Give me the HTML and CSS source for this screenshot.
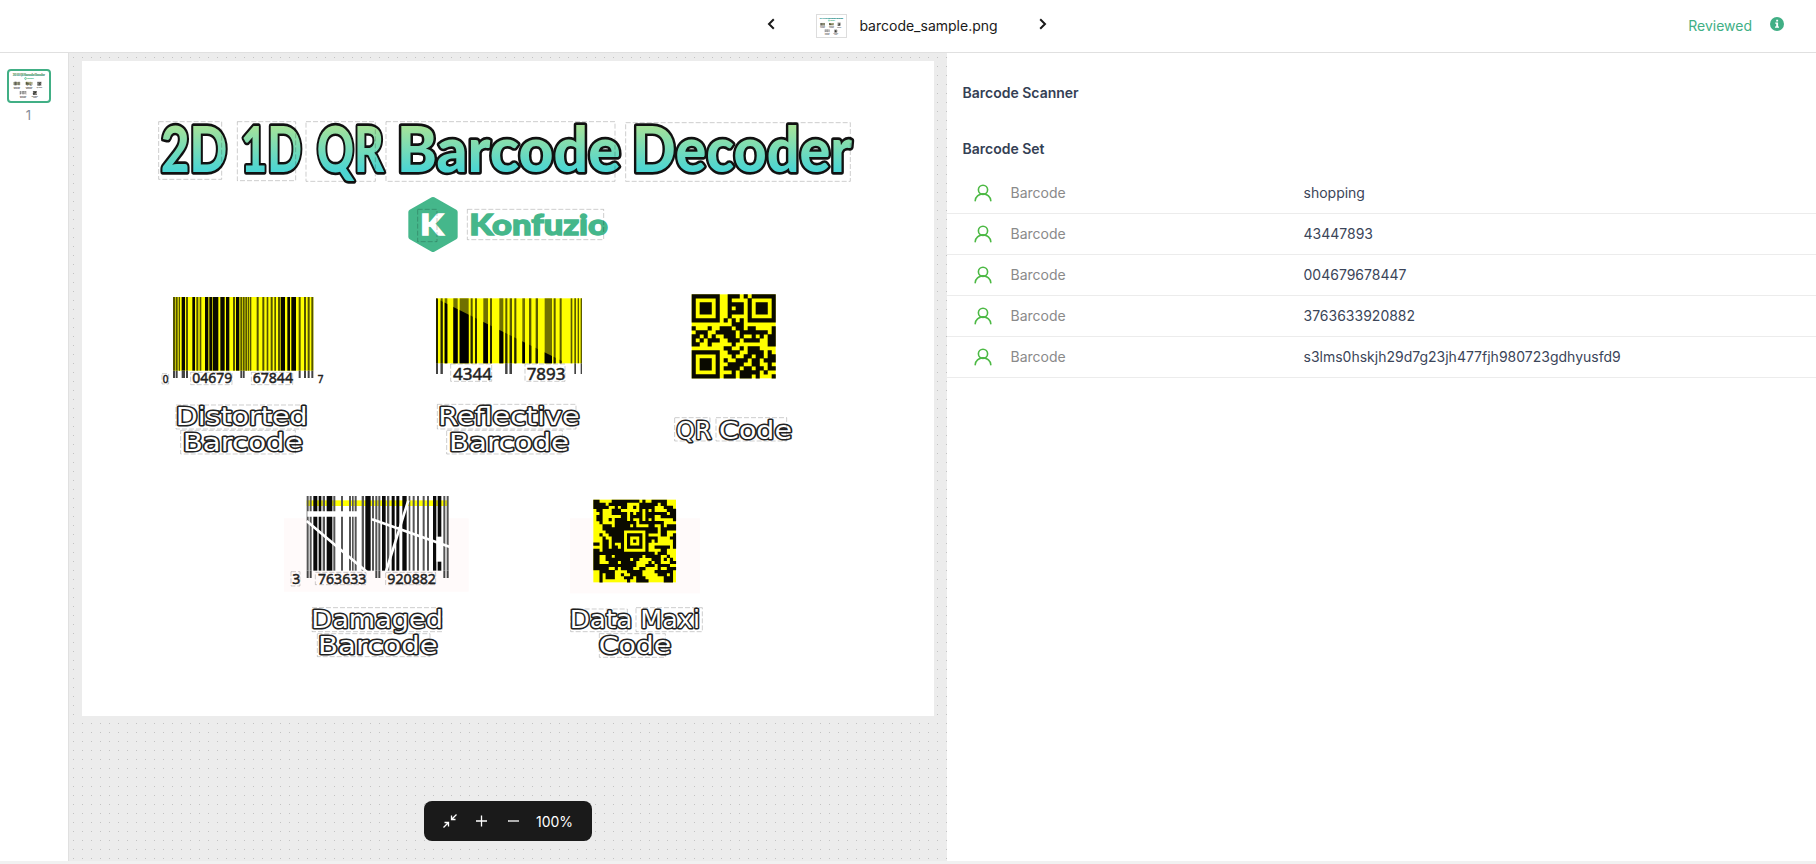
FILE: index.html
```html
<!DOCTYPE html>
<html lang="en">
<head>
<meta charset="utf-8">
<title>barcode_sample.png</title>
<link rel="stylesheet" href="styles.css">
</head>
<body>
<div class="app">
  <header class="topbar">
    <div class="file-nav">
      <svg class="chevron" viewBox="0 0 8 12"><path d="M6.800 1.200 2 6l4.800 4.800"/></svg>
      <div class="file">
        <svg class="file-thumb" viewBox="82 61 852 655"><use href="#art"/></svg>
        <span class="file-name">barcode_sample.png</span>
      </div>
      <svg class="chevron" viewBox="0 0 8 12"><path d="M1.200 1.200 6 6 1.200 10.800"/></svg>
    </div>
    <div class="status">
      <span>Reviewed</span>
      <svg class="info" viewBox="0 0 14 14"><circle cx="7" cy="7" r="7" fill="#41af85"/><path d="M6.200 2.800h1.900v1.700H6.200zM5.200 5.600h2.900v4h.9v1.200H5V9.600h1.200V6.800h-1z" fill="#fff"/></svg>
    </div>
  </header>

  <main class="workspace">
    <aside class="pages">
      <svg class="page-thumb" viewBox="82 61 852 655"><use href="#art"/></svg>
      <span class="page-number">1</span>
    </aside>

    <section class="canvas">
      <svg class="document" viewBox="82 61 852 655">
        <defs>
          <linearGradient id="title-fill" x1="0" y1="0" x2="0" y2="1" gradientUnits="objectBoundingBox">
            <stop offset=".25" stop-color="#a2e29b"/><stop offset=".8" stop-color="#4dd5d2"/>
          </linearGradient>
          <clipPath id="shade"><path d="M40 36 440 235V270H40z"/></clipPath>
        </defs>
        <g id="art">
          <g transform="translate(150 110) scale(.33333)">
            <g class="title">
              <text x="32" y="185" textLength="200">2D</text>
              <text x="272" y="185" textLength="184">1D</text>
              <text x="500" y="185" textLength="202">QR</text>
              <text x="740" y="185" textLength="672">Barcode</text>
              <text x="1446" y="185" textLength="660">Decoder</text>
            </g>
            <path class="hexagon" d="M849 269 915 306V381L849 418 783 381V306z"/>
            <text class="logo-letter" x="811" y="376" textLength="70">K</text>
            <text class="logo-name" x="958" y="376" textLength="416">Konfuzio</text>
            <path class="box" d="M26 35H215V208H26zM262 35H437V212H262zM468 35H676V214H468zM708 35H1395V214H708zM1427 38H2101V214H1427zM803 298H861V395H803zM952 298H1361V389H952z"/>
          </g>

          <g transform="translate(150 285) scale(.33333)">
            <rect class="paper" x="69" y="36" width="421" height="221"/>
            <g id="distorted"></g>
            <g class="digits">
              <text x="38" y="295" class="small" textLength="17">0</text>
              <text x="127" y="294" textLength="120">04679</text>
              <text x="308" y="294" textLength="121">67844</text>
              <text x="503" y="295" class="small" textLength="17">7</text>
            </g>
            <g class="caption">
              <text x="77" y="421" textLength="396">Distorted</text>
              <text x="98" y="497" textLength="360">Barcode</text>
            </g>
            <path class="box" d="M36 266H56V297H36zM122 262H246V299H122zM304 262H428V299H304zM78 360H468V432H78zM92 436H436V507H92z"/>
          </g>

          <g transform="translate(420 285) scale(.33333)">
            <rect class="paper" x="48" y="40" width="438" height="195"/>
            <g id="reflective"></g>
            <g id="reflective-shade" clip-path="url(#shade)"></g>
            <g class="digits large">
              <text x="99" y="286" textLength="117">4344</text>
              <text x="320" y="286" textLength="116">7893</text>
            </g>
            <g class="caption">
              <text x="55" y="421" textLength="424">Reflective</text>
              <text x="87" y="497" textLength="360">Barcode</text>
            </g>
            <path class="box" d="M92 237H215V289H92zM315 237H435V289H315zM52 358H468V432H52zM80 436H427V507H80z"/>
          </g>

          <g transform="translate(660 285) scale(.33333)">
            <rect class="paper" x="95" y="28" width="252" height="252"/>
            <g id="qr"></g>
            <g class="caption">
              <text x="49" y="461" textLength="106">QR</text>
              <text x="177" y="461" textLength="219">Code</text>
            </g>
            <path class="box" d="M44 398H150V468H44zM168 398H380V468H168z"/>
          </g>

          <g transform="translate(280 485) scale(.33333)">
            <rect x="12" y="100" width="554" height="220" fill="#fffafa"/>
            <rect x="80" y="33" width="424" height="225" fill="#fff"/>
            <rect class="paper" x="80" y="46" width="424" height="17"/>
            <g id="damaged"></g>
            <g class="scratch">
              <path d="M80 108 262 262M276 103 508 185M385 46 318 260"/>
              <path d="M82 87H243" class="wide"/>
              <path d="M478 155V230" class="wide"/>
            </g>
            <g class="digits">
              <text x="37" y="296" textLength="24">3</text>
              <text x="114" y="296" textLength="145">763633</text>
              <text x="322" y="296" textLength="146">920882</text>
            </g>
            <g class="caption">
              <text x="94" y="430" textLength="395">Damaged</text>
              <text x="114" y="507" textLength="359">Barcode</text>
            </g>
            <path class="box" d="M33 260H60V303H33zM106 262H258V299H106zM317 262H467V299H317zM96 368H486V440H96zM112 446H450V515H112z"/>
          </g>

          <g transform="translate(550 485) scale(.33333)">
            <rect x="60" y="100" width="390" height="225" fill="#fffafa"/>
            <rect class="paper" x="130" y="44" width="248" height="248"/>
            <g id="maxi"></g>
            <g class="caption">
              <text x="59" y="430" textLength="188">Data</text>
              <text x="271" y="430" textLength="179">Maxi</text>
              <text x="146" y="507" textLength="218">Code</text>
            </g>
            <path class="box" d="M62 372H232V440H62zM258 368H457V440H258zM148 446H346V517H148z"/>
          </g>
        </g>
      </svg>
      <div class="toolbar">
        <svg class="tool" viewBox="0 0 14 14"><path d="M13.500.5 8.500 5.500M8.500 1.500V5.500H12.500M.5 13.500 5.500 8.500M1.500 8.500H5.500V12.500"/></svg>
        <svg class="tool" viewBox="0 0 14 14"><path d="M6.500 1.500V12.500M1 7H12"/></svg>
        <svg class="tool" viewBox="0 0 14 14"><path d="M1 7H12"/></svg>
        <span class="zoom-level">100%</span>
      </div>
    </section>

    <section class="annotations">
      <h1 class="heading">Barcode Scanner</h1>
      <h2 class="heading set-heading">Barcode Set</h2>
      <ul class="rows">
        <li class="row"><svg class="user" viewBox="0 0 18 18"><circle cx="9" cy="5.800" r="4.600"/><path d="M1.200 16.800c.2-4.100 3.500-6.900 7.800-6.900s7.600 2.800 7.800 6.900"/></svg><span class="label">Barcode</span><span class="value">shopping</span></li>
        <li class="row"><svg class="user" viewBox="0 0 18 18"><circle cx="9" cy="5.800" r="4.600"/><path d="M1.200 16.800c.2-4.100 3.500-6.900 7.800-6.900s7.600 2.800 7.800 6.900"/></svg><span class="label">Barcode</span><span class="value">43447893</span></li>
        <li class="row"><svg class="user" viewBox="0 0 18 18"><circle cx="9" cy="5.800" r="4.600"/><path d="M1.200 16.800c.2-4.100 3.500-6.900 7.800-6.900s7.600 2.800 7.800 6.900"/></svg><span class="label">Barcode</span><span class="value">004679678447</span></li>
        <li class="row"><svg class="user" viewBox="0 0 18 18"><circle cx="9" cy="5.800" r="4.600"/><path d="M1.200 16.800c.2-4.100 3.500-6.900 7.800-6.900s7.600 2.800 7.800 6.900"/></svg><span class="label">Barcode</span><span class="value">3763633920882</span></li>
        <li class="row"><svg class="user" viewBox="0 0 18 18"><circle cx="9" cy="5.800" r="4.600"/><path d="M1.200 16.800c.2-4.100 3.500-6.900 7.800-6.900s7.600 2.800 7.800 6.900"/></svg><span class="label">Barcode</span><span class="value">s3lms0hskjh29d7g23jh477fjh980723gdhyusfd9</span></li>
      </ul>
    </section>
  </main>
</div>
<script src="codes.js"></script>
</body>
</html>
```

FILE: styles.css
```css
* { box-sizing: border-box; }

body {
  margin: 0;
  font-family: Inter, "Liberation Sans", sans-serif;
  font-size: 14px;
  background: #fff;
  color: #3b4559;
}

.app {
  display: flex;
  flex-direction: column;
  height: 864px;
  overflow: hidden;
  border-bottom: 3px solid #f1f1f1;
}

.topbar {
  display: grid;
  grid-template-columns: 1fr auto 1fr;
  align-items: center;
  height: 53px;
  flex: none;
  border-bottom: 1px solid #e0e0e0;
}

.file-nav {
  grid-column: 2;
  display: flex;
  align-items: center;
  gap: 41px;
  margin-right: 2px;
}

.chevron {
  width: 8px;
  height: 12px;
  margin-bottom: 4px;
  fill: none;
  stroke: #1a1a1a;
  stroke-width: 2;
}

.file { display: flex; align-items: center; gap: 12px; }

.file-thumb { width: 31px; height: 24px; border: 1px solid #ddd; }

.file-name { color: #1a1a1a; line-height: 20px; }

.status {
  display: flex;
  justify-content: flex-end;
  align-items: center;
  gap: 18px;
  padding-right: 32px;
  color: #41af85;
  line-height: 20px;
}

.info { width: 14px; height: 14px; margin-bottom: 4px; }

.workspace { display: flex; flex: 1; min-height: 0; }

.pages {
  display: flex;
  flex-direction: column;
  align-items: center;
  gap: 5px;
  width: 69px;
  padding: 16px 11px 0 0;
  border-right: 1px solid #e0e0e0;
}

.page-thumb {
  width: 44px;
  height: 34px;
  border: 2px solid #41af85;
  border-radius: 4px;
}

.page-thumb, .file-thumb { --paper: #ccc; }

.page-number { font-size: 13px; line-height: 14px; color: #858c9a; }

.canvas {
  display: flex;
  flex-direction: column;
  align-items: center;
  justify-content: space-between;
  width: 878px;
  padding: 8px 0 20px;
  background: #ececec radial-gradient(circle at 4.500px 4.500px, #c2c2c2 .7px, transparent .8px) 0 0 / 9px 9px;
}

.document { width: 852px; height: 655px; background: #fff; }

.paper { fill: var(--paper, #ff0); }

.title text {
  font: 900 190px Lato, sans-serif;
  fill: url(#title-fill);
  stroke: #111;
  stroke-width: 16px;
  stroke-linejoin: round;
  paint-order: stroke;
}

.hexagon { fill: #45b78b; stroke: #45b78b; stroke-width: 16px; stroke-linejoin: round; }

.logo-letter, .logo-name { font: 900 88px Lato, sans-serif; stroke-width: 4px; }
.logo-letter { fill: #fff; stroke: #fff; }
.logo-name { fill: #45b78b; stroke: #45b78b; }

.digits text { font: 43px "Noto Sans", sans-serif; fill: #222; stroke: #222; stroke-width: 1.500px; }
.digits.large text { font-size: 51px; }
.digits .small { font-size: 32px; }

.caption text {
  font: 74px "DejaVu Sans", sans-serif;
  fill: #fff;
  stroke: #222;
  stroke-width: 9px;
  stroke-linejoin: round;
  paint-order: stroke;
}

.document text { white-space: pre; }

.box {
  fill: none;
  stroke: rgba(0, 0, 0, .2);
  stroke-width: 3px;
  stroke-dasharray: 15 6;
}

.scratch path { fill: none; stroke: #fff; stroke-width: 8px; }
.scratch .wide { stroke-width: 17px; }

.toolbar {
  display: flex;
  align-items: center;
  gap: 18px;
  width: 168px;
  height: 40px;
  padding-left: 19px;
  border-radius: 8px;
  background: #1a1a1a;
  color: #fff;
}

.tool { width: 14px; height: 14px; fill: none; stroke: #fff; stroke-width: 1.300; }

.zoom-level { margin-left: -3px; }

.annotations { flex: 1; padding-top: 30px; min-width: 0; }

.heading {
  margin: 0;
  padding-left: 15.500px;
  font-size: 14px;
  font-weight: 600;
  line-height: 20px;
  color: #344054;
}

.set-heading { margin-top: 36px; }

.rows { margin: 14px 0 0; padding: 0; list-style: none; }

.row {
  display: grid;
  grid-template-columns: 36.500px 293px 1fr;
  align-items: center;
  height: 41px;
  padding-left: 27px;
  border-bottom: 1px solid #ececec;
  line-height: 20px;
}

.user { width: 18px; height: 18px; fill: none; stroke: #4cb944; stroke-width: 1.600; stroke-linecap: round; }

.label { color: #8a8a8a; }
```

FILE: codes.js
```javascript
const NS = "http://www.w3.org/2000/svg";

function path(id, d, fill) {
  const el = document.createElementNS(NS, "path");
  el.setAttribute("d", d);
  if (fill) el.setAttribute("fill", fill);
  else el.setAttribute("class", "paper");
  document.getElementById(id).appendChild(el);
}

function bars(id, list, top, bottom, guard, isGuard, thin, wide) {
  for (const [a, b] of list) {
    const dark = b - a >= 8;
    path(id, `M${a} ${top}H${b}V${bottom}H${a}z`, dark ? wide : thin);
    if (isGuard(a)) path(id, `M${a} ${bottom}H${b}V${guard}H${a}z`, "#444");
  }
}

bars("distorted", [[69,75],[77,83],[86,90],[95,105],[108,114],[127,135],[139,145],[149,154],[165,175],[178,187],[189,205],[211,224],[228,238],[249,255],[258,268],[271,277],[279,284],[286,291],[293,298],[300,304],[320,326],[337,343],[350,355],[362,368],[373,378],[384,390],[392,405],[412,420],[424,438],[446,452],[462,468],[473,479],[484,490]],
  36, 257, 279, x => x < 82 || (x > 94 && x < 114) || (x > 270 && x < 285) || x > 440, "#555500", "#0a0a00");

const reflective = [[48,54],[62,68],[74,82],[100,113],[119,146],[152,158],[165,171],[190,204],[210,216],[238,250],[256,262],[269,276],[283,289],[307,315],[327,334],[347,354],[374,396],[401,407],[419,425],[452,457],[463,468],[473,477],[482,486]];
const reflectiveGuard = x => x < 70 || (x > 250 && x < 275) || (x > 460 && x !== 473);
bars("reflective", reflective, 40, 235, 267, reflectiveGuard, "#5b5b00", "#707000");
bars("reflective-shade", reflective, 40, 235, 267, reflectiveGuard, "#222200", "#000");

bars("damaged", [[80,86],[89,95],[100,112],[116,124],[128,135],[140,157],[160,166],[183,189],[207,213],[216,221],[224,230],[245,252],[256,272],[276,282],[286,292],[295,301],[306,317],[321,328],[335,344],[349,358],[367,380],[386,391],[398,404],[411,417],[428,434],[441,447],[459,469],[473,484],[490,496],[500,506]],
  33, 257, 279, x => x < 90 || (x > 283 && x < 300) || x > 489, "#555", "#0a0a0a");

function modules(id, rows, x, y, size) {
  let d = "";
  rows.forEach((row, r) => {
    [...row].forEach((c, i) => {
      if (c === "1") d += `M${x + i * size} ${y + r * size}h${size + .3}v${size + .3}h-${size + .3}z`;
    });
  });
  path(id, d, "#0a0a00");
}

modules("qr", [
  "111111100111010111111",
  "10000010010000" + "1000001",
  "10111010011110" + "1011101",
  "10111010010110" + "1011101",
  "10111010011110" + "1011101",
  "10000010010000" + "1000001",
  "11111110101010" + "1111111",
  "00000000001110" + "0000000",
  "100010011101101100001",
  "011100111110111111101",
  "110101001110100101011",
  "101011100111011110011",
  "110010000010000000011",
  "000000001100101110000",
  "111111100111001111010",
  "100000100010011011011",
  "101110101001110110111",
  "101110100111100110010",
  "101110101111011011011",
  "100000100010111110100",
  "111111101110111010001"
], 95, 28, 12);

// Aztec symbol: concentric core surrounded by data modules that tend to run together.
let seed = 7;
const next = () => (seed = (seed * 48271) % 2147483647) / 2147483647;
const aztec = [];
for (let r = 0; r < 27; r++) {
  let row = "";
  for (let c = 0; c < 27; c++) {
    const ring = Math.max(Math.abs(r - 13), Math.abs(c - 13));
    const v = next();
    const w = next();
    if (ring <= 4) row += ring % 2 ? "0" : "1";
    else if (w < .25 && c) row += row[c - 1];
    else if (w < .5 && r) row += aztec[r - 1][c];
    else row += v < .52 ? "1" : "0";
  }
  aztec.push(row);
}
modules("maxi", aztec, 130, 44, 248 / 27);

document.querySelectorAll(".document text").forEach(t => t.setAttribute("lengthAdjust", "spacingAndGlyphs"));
```
